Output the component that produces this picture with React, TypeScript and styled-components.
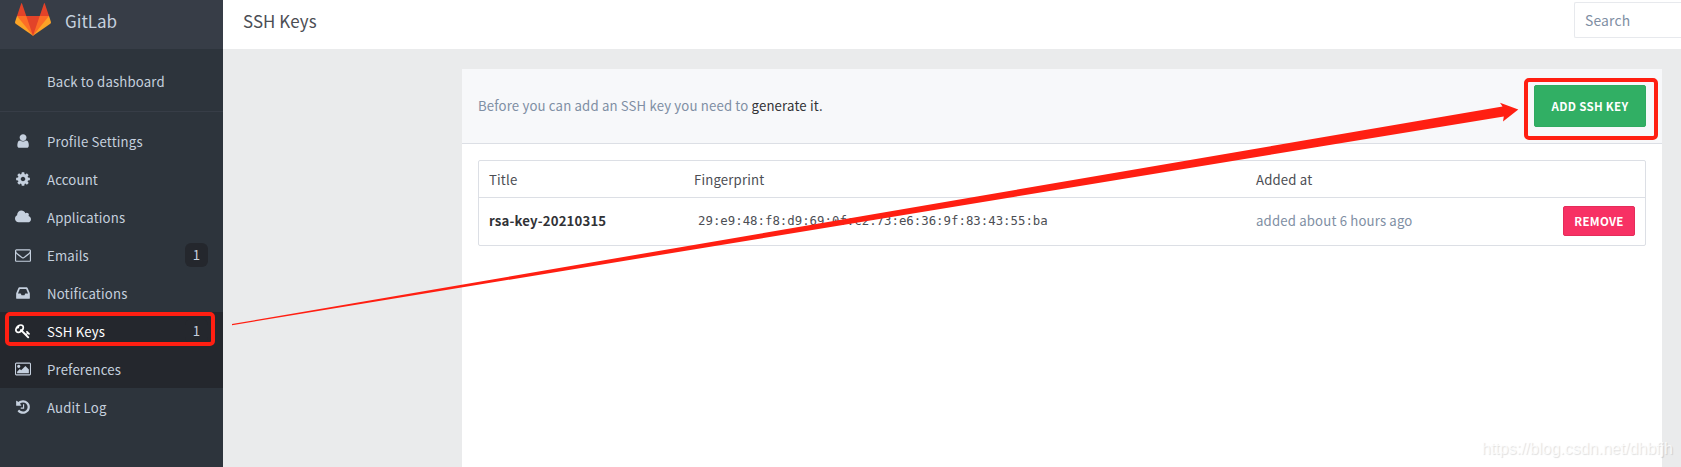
import React from 'react';
import styled, { createGlobalStyle } from 'styled-components';

const sans = '"Noto Sans CJK SC", "Noto Sans", sans-serif';

const GlobalStyle = createGlobalStyle`
  * { box-sizing: border-box; }
  html, body { margin: 0; padding: 0; overflow: hidden; }
  body { background: #eaebec; font-family: ${sans}; font-size: 13.2px; line-height: 20px; letter-spacing: 0.16px; color: #4c4e54; }
`;

const Page = styled.div`
  position: relative;
  display: flex;
  height: 467px;
  overflow: hidden;
`;

const Sidebar = styled.aside`
  flex: 0 0 223px;
  background: #2d343c;
  color: #c5d0de;
`;

const Brand = styled.div`
  display: flex;
  align-items: flex-start;
  height: 49px;
  padding: 3px 0 0 15px;
  background: #373d47;
`;

const BrandName = styled.span`
  margin: 6px 0 0 14px;
  font-size: 17px;
  line-height: 24px;
  letter-spacing: 0;
`;

const BackLink = styled.a`
  display: flex;
  align-items: center;
  height: 63px;
  padding: 4px 0 0 47px;
  border-bottom: 1px solid #373d47;
`;

const Nav = styled.nav`
  display: flex;
  flex-direction: column;
  padding-top: 10px;
`;

const NavItem = styled.a<{ $dark?: boolean; $active?: boolean }>`
  display: flex;
  align-items: center;
  height: 38px;
  padding: 0 15px 0 15px;
  background: ${p => (p.$dark ? '#24272d' : 'transparent')};
  color: ${p => (p.$active ? '#fff' : '#c5d0de')};
`;

const IconSlot = styled.span`
  display: flex;
  justify-content: center;
  width: 16px;
  margin-right: 16px;
`;

const NavLabel = styled.span`
  flex: 1;
  padding-top: 1px;
`;

const Count = styled.span`
  width: 23px;
  height: 24px;
  border-radius: 6px;
  background: #24272d;
  color: #c5d0de;
  line-height: 24px;
  text-align: center;
`;

const Main = styled.main`
  flex: 1;
  display: flex;
  flex-direction: column;
  min-width: 0;
`;

const TopBar = styled.header`
  display: flex;
  justify-content: space-between;
  height: 49px;
  padding: 2px 0 0 20px;
  background: #fff;
`;

const PageTitle = styled.h1`
  margin: 7px 0 0;
  font-size: 16.9px;
  font-weight: 400;
  line-height: 24px;
  letter-spacing: 0.1px;
`;

const SearchBox = styled.div`
  width: 107px;
  height: 36px;
  padding: 7px 0 0 10px;
  border: 1px solid #e7e9ed;
  border-right: 0;
  border-radius: 2px 0 0 2px;
  color: #7f8fa4;
  font-size: 13.9px;
`;

const Panel = styled.section`
  width: 1200px;
  flex: 1;
  margin: 20px 0 0 239px;
  background: #fff;
`;

const PanelHead = styled.div`
  display: flex;
  justify-content: space-between;
  align-items: center;
  height: 75px;
  padding: 0 16px;
  background: #f7f8fa;
  border-bottom: 1px solid #dcdfe5;
  color: #7f8fa4;
`;

const DarkLink = styled.a`
  color: #313236;
`;

const Button = styled.button<{ $kind: 'add' | 'remove' }>`
  width: ${p => (p.$kind === 'add' ? 112 : 72)}px;
  height: ${p => (p.$kind === 'add' ? 42 : 30)}px;
  padding: 0;
  border: 1px solid ${p => (p.$kind === 'add' ? '#2faa60' : '#e52c5a')};
  border-radius: 2px;
  background: ${p => (p.$kind === 'add' ? '#31af64' : '#f73164')};
  color: #fff;
  font: 700 11.5px/20px ${sans};
  letter-spacing: 0.3px;
`;

const Table = styled.div`
  margin: 16px 16px 0;
  border: 1px solid #dcdfe5;
  border-radius: 2px;
`;

const Row = styled.div<{ $head?: boolean }>`
  display: grid;
  grid-template-columns: 205px 562px 1fr auto;
  align-items: center;
  height: ${p => (p.$head ? 37 : 47)}px;
  padding: ${p => (p.$head ? '1px 10px 0' : '0 10px 1px')};
  border-bottom: ${p => (p.$head ? '1px solid #dcdfe5' : '0')};
`;

const KeyName = styled.strong`
  color: #313236;
  font-weight: 700;
`;

const Fingerprint = styled.code`
  padding-left: 4px;
  font: 12.36px/20px "DejaVu Sans Mono", monospace;
  letter-spacing: 0;
`;

const Muted = styled.span`
  color: #7f8fa4;
`;

const Highlight = styled.div<{ $x: number; $y: number; $w: number; $h: number }>`
  position: absolute;
  left: ${p => p.$x}px;
  top: ${p => p.$y}px;
  width: ${p => p.$w}px;
  height: ${p => p.$h}px;
  border: 4px solid #ff1f12;
  border-radius: 5px;
`;

const Arrow = styled.svg`
  position: absolute;
  left: 0;
  top: 0;
`;

const Watermark = styled.span`
  position: absolute;
  right: 8px;
  bottom: 8px;
  font: 16px/20px "Liberation Sans", sans-serif;
  letter-spacing: 0;
  color: rgba(255, 255, 255, 0.75);
  text-shadow: 1px 1px 1px rgba(0, 0, 0, 0.13);
`;

const Logo = () => (
  <svg width="36" height="33" viewBox="15 3 36 33">
    <path fill="#fca326" d="M17 16L15.1 21.7Q14.8 23 15.7 23.7L33 35.8L50.3 23.7Q51.2 23 50.9 21.7L49 16Z" />
    <path fill="#fc6d26" d="M17 16H49L33 35.8Z" />
    <path fill="#e24329" d="M26.3 16H39.7L33 35.8ZM17 16L21.2 3.4Q21.6 2.8 22 3.4L26.3 16ZM49 16L44.8 3.4Q44.4 2.8 44 3.4L39.7 16Z" />
  </svg>
);

const icons = {
  user: { w: 1280, x: 0, d: 'M1280 1399q0 109-62.5 187t-150.5 78h-854q-88 0-150.5-78t-62.5-187q0-85 8.5-160.5t31.5-152 58.5-131 94-89 134.5-34.5q131 128 313 128t313-128q76 0 134.5 34.5t94 89 58.5 131 31.5 152 8.5 160.5zm-256-887q0 159-112.5 271.5t-271.5 112.5-271.5-112.5-112.5-271.5 112.5-271.5 271.5-112.5 271.5 112.5 112.5 271.5z' },
  cog: { w: 1792, x: 0, d: 'M1152 896q0-106-75-181t-181-75-181 75-75 181 75 181 181 75 181-75 75-181zm512-109v222q0 12-8 23t-20 13l-185 28q-19 54-39 91 35 50 107 138 10 12 10 25t-9 23q-27 37-99 108t-94 71q-12 0-26-9l-138-108q-44 23-91 38-16 136-29 186-7 28-36 28h-222q-14 0-24.5-8.5t-11.5-21.5l-28-184q-49-16-90-37l-141 107q-10 9-25 9-14 0-25-11-126-114-165-168-7-10-7-23 0-12 8-23 15-21 51-66.5t54-70.5q-27-50-41-99l-183-27q-13-2-21-12.5t-8-23.5v-222q0-12 8-23t19-13l186-28q14-46 39-92-40-57-107-138-10-12-10-24 0-10 9-23 26-36 98.5-107.5t94.5-71.5q13 0 26 10l138 107q44-23 91-38 16-136 29-186 7-28 36-28h222q14 0 24.5 8.5t11.5 21.5l28 184q49 16 90 37l142-107q9-9 24-9 13 0 25 10 129 119 165 170 7 8 7 22 0 12-8 23-15 21-51 66.5t-54 70.5q26 50 41 98l183 28q13 2 21 12.5t8 23.5z' },
  cloud: { w: 1920, x: 64, d: 'M1984 1152q0 159-112.5 271.5t-271.5 112.5h-1088q-185 0-316.5-131.5t-131.5-316.5q0-132 71-241.5t187-163.5q-2-28-2-43 0-212 150-362t362-150q158 0 286.5 88t187.5 230q70-62 166-62 106 0 181 75t75 181q0 75-41 138 129 30 213 134.5t84 239.5z' },
  envelope: { w: 1792, x: 0, d: 'M1664 1504v-768q-32 36-69 66-268 206-426 338-51 43-83 67t-86.5 48.5-102.5 24.5h-2q-48 0-102.5-24.5t-86.5-48.5-83-67q-158-132-426-338-37-30-69-66v768q0 13 9.5 22.5t22.5 9.5h1472q13 0 22.5-9.5t9.5-22.5zm0-1051v-24.5l-.5-13-3-12.5-5.5-9-9-7.5-14-2.5h-1472q-13 0-22.5 9.5t-9.5 22.5q0 168 147 284 193 152 401 317 6 5 35 29.5t46 37.5 44.5 31.5 50.5 27.5 43 9h2q20 0 43-9t50.5-27.5 44.5-31.5 46-37.5 35-29.5q208-165 401-317 54-43 100.5-115.5t46.5-131.5zm128-37v1088q0 66-47 113t-113 47h-1472q-66 0-113-47t-47-113v-1088q0-66 47-113t113-47h1472q66 0 113 47t47 113z' },
  inbox: { w: 1792, x: 0, d: 'M1151 960h316q-1-3-2.5-8.5t-2.5-7.5l-212-496h-708l-212 496q-1 3-2.5 8.5t-2.5 7.5h316l95 192h320zm513 30v482q0 26-19 45t-45 19h-1408q-26 0-45-19t-19-45v-482q0-62 25-123l238-552q10-25 36.5-42t52.5-17h832q26 0 52.5 17t36.5 42l238 552q25 61 25 123z' },
  key: { w: 1792, x: 0, d: 'M832 512q0-80-56-136t-136-56-136 56-56 136q0 42 19 83-41-19-83-19-80 0-136 56t-56 136 56 136 136 56 136-56 56-136q0-42-19-83 41 19 83 19 80 0 136-56t56-136zm851 704q0 17-49 66t-66 49q-9 0-28.5-16t-36.5-33-38.5-40-24.5-26l-96 96 220 220q28 28 28 68 0 42-39 81t-81 39q-40 0-68-28l-671-671q-176 131-365 131-163 0-265.5-102.5t-102.5-265.5q0-160 95-313t248-248 313-95q163 0 265.5 102.5t102.5 265.5q0 189-131 365l355 355 96-96q-3-3-26-24.5t-40-38.5-33-36.5-16-28.5q0-17 49-66t66-49q13 0 23 10 6 6 46 44.5t82 79.5 86.5 86 73 78 28.5 41z' },
  image: { w: 1920, x: -64, d: 'M576 576q0 80-56 136t-136 56-136-56-56-136 56-136 136-56 136 56 56 136zm1024 384v448h-1408v-192l320-320 160 160 512-512zm96-704h-1600q-13 0-22.5 9.5t-9.5 22.5v1216q0 13 9.5 22.5t22.5 9.5h1600q13 0 22.5-9.5t9.5-22.5v-1216q0-13-9.5-22.5t-22.5-9.5zm160 32v1216q0 66-47 113t-113 47h-1600q-66 0-113-47t-47-113v-1216q0-66 47-113t113-47h1600q66 0 113 47t47 113z' },
  history: { w: 1792, x: 0, d: 'M1664 896q0 156-61 298t-164 245-245 164-298 61q-172 0-327-72.5t-264-204.5q-7-10-6.5-22.5t8.5-20.5l137-138q10-9 25-9 16 2 23 12 73 95 179 147t225 52q104 0 198.5-40.5t163.5-109.5 109.5-163.5 40.5-198.5-40.5-198.5-109.5-163.5-163.5-109.5-198.5-40.5q-98 0-188 35.5t-160 101.5l137 138q31 30 14 69-17 40-59 40h-448q-26 0-45-19t-19-45v-448q0-42 40-59 39-17 69 14l130 129q107-101 244.5-156.5t284.5-55.5q156 0 298 61t245 164 164 245 61 298zm-640-288v448q0 14-9 23t-23 9h-320q-14 0-23-9t-9-23v-64q0-14 9-23t23-9h224v-352q0-14 9-23t23-9h64q14 0 23 9t9 23z' },
};

const Icon = ({ name }: { name: keyof typeof icons }) => {
  const { w, x, d } = icons[name];
  return (
    <svg width={Math.min(16, (w / 1792) * 17)} height="16" viewBox={`${x} 0 ${w} 1792`} fill="currentColor">
      <path d={d} />
    </svg>
  );
};

const items: { icon: keyof typeof icons; label: string; count?: number; dark?: boolean; active?: boolean }[] = [
  { icon: 'user', label: 'Profile Settings' },
  { icon: 'cog', label: 'Account' },
  { icon: 'cloud', label: 'Applications' },
  { icon: 'envelope', label: 'Emails', count: 1 },
  { icon: 'inbox', label: 'Notifications' },
  { icon: 'key', label: 'SSH Keys', count: 1, dark: true, active: true },
  { icon: 'image', label: 'Preferences', dark: true },
  { icon: 'history', label: 'Audit Log' },
];

export default function App() {
  return (
    <Page>
      <GlobalStyle />
      <Sidebar>
        <Brand>
          <Logo />
          <BrandName>GitLab</BrandName>
        </Brand>
        <BackLink>Back to dashboard</BackLink>
        <Nav>
          {items.map(i => (
            <NavItem key={i.label} $dark={i.dark} $active={i.active}>
              <IconSlot><Icon name={i.icon} /></IconSlot>
              <NavLabel>{i.label}</NavLabel>
              {i.count && <Count>{i.count}</Count>}
            </NavItem>
          ))}
        </Nav>
      </Sidebar>
      <Main>
        <TopBar>
          <PageTitle>SSH Keys</PageTitle>
          <SearchBox>Search</SearchBox>
        </TopBar>
        <Panel>
          <PanelHead>
            <span>Before you can add an SSH key you need to <DarkLink>generate it.</DarkLink></span>
            <Button $kind="add">ADD SSH KEY</Button>
          </PanelHead>
          <Table>
            <Row $head>
              <span>Title</span>
              <span>Fingerprint</span>
              <span>Added at</span>
            </Row>
            <Row>
              <KeyName>rsa-key-20210315</KeyName>
              <Fingerprint>29:e9:48:f8:d9:69:0f:c2:73:e6:36:9f:83:43:55:ba</Fingerprint>
              <Muted>added about 6 hours ago</Muted>
              <Button $kind="remove">REMOVE</Button>
            </Row>
          </Table>
        </Panel>
      </Main>
      <Highlight $x={5} $y={312} $w={210} $h={34} />
      <Highlight $x={1524} $y={78} $w={134} $h={62} />
      <Arrow width="1681" height="467" viewBox="0 0 1681 467">
        <path fill="#ff1f12" d="M232 324L1502.5 106.5L1500 102.7L1518.3 109.5L1503 121.6L1503.8 116.5L232 325.2Z" />
      </Arrow>
      <Watermark>https://blog.csdn.net/dhbfjh</Watermark>
    </Page>
  );
}
